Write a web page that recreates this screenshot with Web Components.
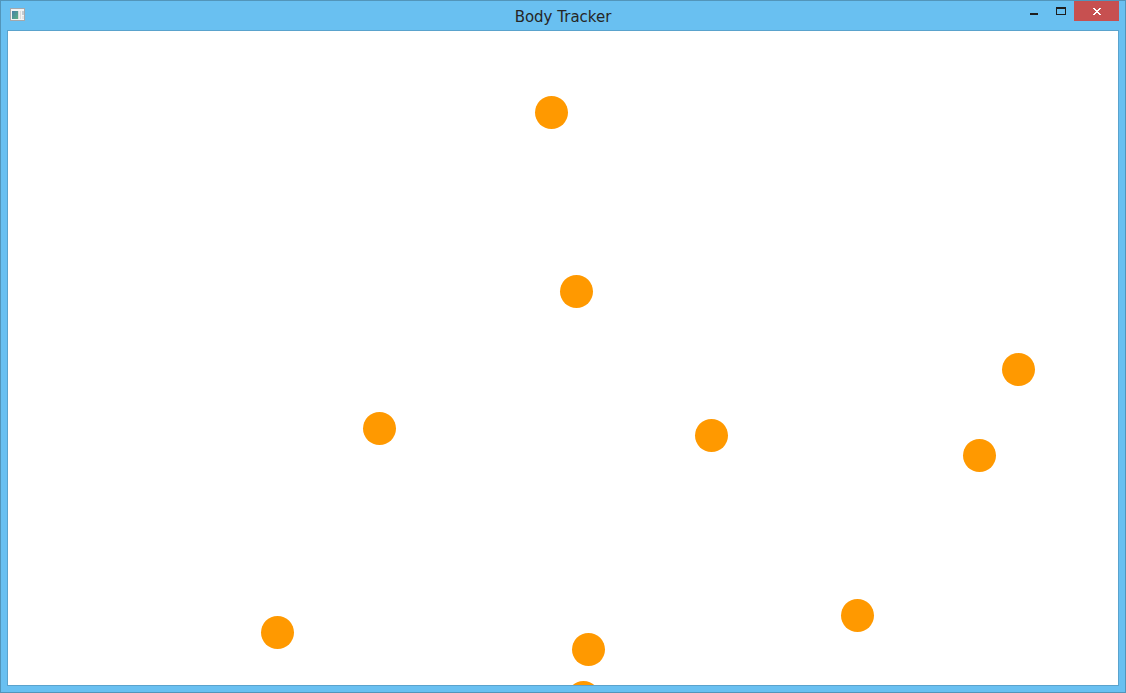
<!DOCTYPE html>
<html lang="en">
<head>
<meta charset="utf-8">
<title>Body Tracker</title>
<style>
  body { margin: 0; font-family: "DejaVu Sans", "Open Sans", sans-serif; }
</style>
</head>
<body>
<app-window>
  <title-bar slot="title">Body Tracker</title-bar>
  <body-canvas></body-canvas>
</app-window>

<script>
class AppWindow extends HTMLElement {
  constructor() {
    super();
    this.attachShadow({ mode: "open" }).innerHTML = `
      <style>
        :host {
          display: flex; flex-direction: column; box-sizing: border-box;
          height: 100vh; padding: 0 6px 6px;
          border: 1px solid #5295ba; background: #69c0f1;
        }
        main {
          flex: 1; min-height: 0; display: flex;
          border: 1px solid #5aa3cd; background: #fff;
        }
      </style>
      <slot name="title"></slot>
      <main><slot></slot></main>`;
  }
}

class TitleBar extends HTMLElement {
  constructor() {
    super();
    this.attachShadow({ mode: "open" }).innerHTML = `
      <style>
        :host {
          display: grid; grid-template-columns: 1fr auto 1fr;
          height: 29px; color: #262626;
        }
        .app-icon { margin: 7px 0 0 3px; }
        svg { display: block; }
        h1 { margin: 0; font-size: 15px; font-weight: 400; line-height: 32px; white-space: nowrap; }
      </style>
      <svg class="app-icon" width="15" height="13" viewBox="0 0 15 13" shape-rendering="crispEdges">
        <defs><linearGradient id="g" x2="1" y2="1"><stop stop-color="#477fa8"/><stop offset="1" stop-color="#5cb083"/></linearGradient></defs>
        <rect width="15" height="13" fill="#a5a8ab"/>
        <rect x="1" y="1" width="13" height="11" fill="#f4f4f4"/>
        <rect x="2" y="3" width="6" height="8" fill="url(#g)"/>
        <rect x="8" y="3" width="3" height="8" fill="#dadada"/>
        <rect x="9" y="3" width="1" height="8" fill="#eee"/>
        <rect x="12" y="3" width="2" height="4" fill="#c3cbd1"/>
        <rect x="12" y="8" width="2" height="3" fill="#e2e2e2"/>
      </svg>
      <h1><slot></slot></h1>
      <window-controls></window-controls>`;
  }
}

class WindowControls extends HTMLElement {
  constructor() {
    super();
    this.attachShadow({ mode: "open" }).innerHTML = `
      <style>
        :host { display: flex; justify-content: flex-end; align-items: flex-start; }
        button {
          width: 27px; height: 20px; margin: 0; padding: 0; border: 0;
          display: grid; place-items: center; background: transparent;
        }
        button.close { width: 45px; background: #c75050; }
        svg { display: block; }
      </style>
      <button type="button" aria-label="Minimize">
        <svg width="27" height="20" viewBox="0 0 27 20" shape-rendering="crispEdges"><path fill="#1e1e1e" d="M10 12h8v2h-8z"/></svg>
      </button>
      <button type="button" aria-label="Maximize">
        <svg width="27" height="20" viewBox="0 0 27 20" shape-rendering="crispEdges"><path fill="#1e1e1e" fill-rule="evenodd" d="M9 6h10v8H9zM10 8v5h8V8z"/></svg>
      </button>
      <button type="button" class="close" aria-label="Close">
        <svg width="45" height="20" viewBox="0 0 45 20" shape-rendering="crispEdges"><path fill="#fff" d="M19 7h2v1h1v1h2V8h1V7h2v1h-1v1h-1v1h-1v1h1v1h1v1h1v1h-2v-1h-1v-1h-2v1h-1v1h-2v-1h1v-1h1v-1h1v-1h-1V9h-1V8h-1z"/></svg>
      </button>`;
  }
}

/* Tracked joints: top-left corner of each marker on the free canvas. */
const JOINTS = [
  [527, 65], [552, 244], [994, 322], [355, 381], [687, 388],
  [955, 408], [833, 568], [253, 585], [564, 602], [559, 650]
];

class BodyCanvas extends HTMLElement {
  constructor() {
    super();
    this.attachShadow({ mode: "open" }).innerHTML = `
      <style>:host { display: block; position: relative; flex: 1; overflow: hidden; }</style>`;
    for (const [x, y] of JOINTS) {
      const joint = document.createElement("body-joint");
      joint.style.left = x + "px";
      joint.style.top = y + "px";
      this.shadowRoot.append(joint);
    }
  }
}

class BodyJoint extends HTMLElement {
  constructor() {
    super();
    this.attachShadow({ mode: "open" }).innerHTML = `
      <style>:host { display: block; position: absolute; width: 33px; height: 33px; border-radius: 50%; background: #ff9900; }</style>`;
  }
}

customElements.define("body-joint", BodyJoint);
customElements.define("body-canvas", BodyCanvas);
customElements.define("window-controls", WindowControls);
customElements.define("title-bar", TitleBar);
customElements.define("app-window", AppWindow);
</script>
</body>
</html>
